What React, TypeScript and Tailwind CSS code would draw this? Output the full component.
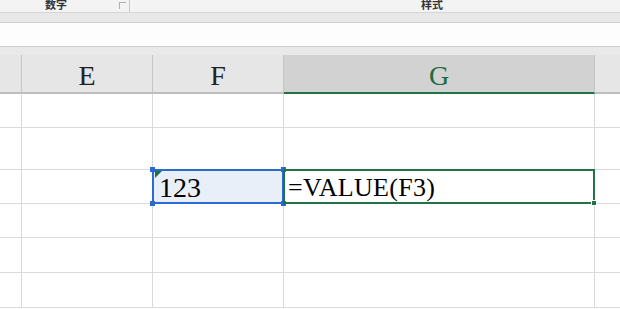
const SERIF = { fontFamily: '"Liberation Serif", "Noto Sans CJK SC", serif' };
const CJK = { fontFamily: '"Noto Sans CJK SC", sans-serif' };

const ROW_HEIGHTS = [34, 42, 34, 34, 35, 35];
const COLS = "grid-cols-[22px_131px_131px_311px_1fr]";
const HEAD = "flex items-center justify-center border-b-2 border-r pt-[4px] text-[28px] leading-none";

function Handle({ className }: { className: string }) {
  return <span className={`absolute size-[5px] bg-[#2a6bd1] ${className}`} />;
}

export default function App() {
  return (
    <div className="h-[309px] w-[620px] overflow-hidden bg-white text-black">
      {/* ribbon bottom edge: group labels cut at the top */}
      <div className="flex h-[13px] items-end border-b border-[#d6d6d6] bg-[#f3f3f3] pb-[4px]" style={CJK}>
        <span className="ml-[45px] text-[11px] font-bold leading-[8px] text-[#333]">数字</span>
        <span className="ml-[52px] mb-[-1px] size-[7px] border-l border-t border-[#b0b0b0]" />
        <span className="ml-[3px] h-[12px] w-px self-start bg-[#c8c8c8]" />
        <span className="ml-[291px] text-[11px] font-bold leading-[8px] text-[#333]">样式</span>
      </div>
      <div className="h-[10px] border-b border-[#d0d0d0] bg-[#e8e8e8]" />
      {/* formula bar */}
      <div className="h-[24px] border-b border-[#cfcfcf] bg-[#fdfdfd]" />
      <div className="h-[8px] bg-[#e9e9e9]" />

      {/* column header */}
      <div className={`grid h-[39px] ${COLS} bg-[#e6e6e6]`} style={SERIF}>
        <div className="border-b-2 border-r border-[#c4c4c4] border-b-[#bdbdbd]" />
        <div className={`${HEAD} border-[#c4c4c4] border-b-[#bdbdbd] text-[#222]`}>E</div>
        <div className={`${HEAD} border-[#c4c4c4] border-b-[#bdbdbd] text-[#222]`}>F</div>
        <div className={`${HEAD} border-[#c4c4c4] border-b-[#217346] bg-[#d2d2d2] text-[#1e6b41]`}>G</div>
        <div className="border-b-2 border-[#bdbdbd]" />
      </div>

      {/* rows */}
      {ROW_HEIGHTS.map((h, r) => (
        <div key={r} className={`grid ${COLS}`} style={{ height: h }}>
          <div className="border-b border-r border-[#dadada]" />
          <div className="border-b border-r border-[#dadada]" />
          {r === 2 ? (
            <>
              <div className="relative flex items-center border-b border-r border-[#dadada] bg-[#e8eff9] pl-[6px] pt-[3px]" style={SERIF}>
                <div className="pointer-events-none absolute inset-[-1px] border-2 border-[#2a6bd1]" />
                <span className="absolute left-[2px] top-[1px] size-0 border-r-[7px] border-t-[7px] border-r-transparent border-t-[#1e7145]" />
                <Handle className="left-[-3px] top-[-3px]" />
                <Handle className="right-[-3px] top-[-3px]" />
                <Handle className="bottom-[-3px] left-[-3px]" />
                <Handle className="bottom-[-3px] right-[-3px]" />
                <span className="text-[28px] leading-none">123</span>
              </div>
              <div className="relative flex items-center border-b border-r border-[#dadada] pl-[4px] pt-[3px]" style={SERIF}>
                <div className="pointer-events-none absolute inset-[-1px] border-2 border-[#217346]" />
                <span className="absolute bottom-[-3px] right-[-3px] size-[6px] border border-white bg-[#217346]" />
                <span className="text-[26px] leading-none tracking-[0.3px]">=VALUE(F3)</span>
              </div>
            </>
          ) : (
            <>
              <div className="border-b border-r border-[#dadada]" />
              <div className="border-b border-r border-[#dadada]" />
            </>
          )}
          <div className="border-b border-[#dadada]" />
        </div>
      ))}
    </div>
  );
}
